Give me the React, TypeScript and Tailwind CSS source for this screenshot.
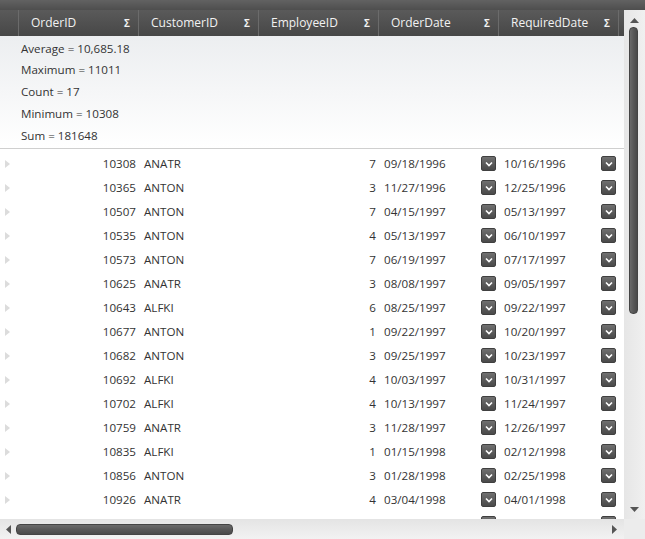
import React from 'react';

type Order = {
    id: number;
    customer: string;
    employee: number;
    orderDate: string;
    requiredDate: string;
};

const orders: Order[] = [
    { id: 10308, customer: 'ANATR', employee: 7, orderDate: '09/18/1996', requiredDate: '10/16/1996' },
    { id: 10365, customer: 'ANTON', employee: 3, orderDate: '11/27/1996', requiredDate: '12/25/1996' },
    { id: 10507, customer: 'ANTON', employee: 7, orderDate: '04/15/1997', requiredDate: '05/13/1997' },
    { id: 10535, customer: 'ANTON', employee: 4, orderDate: '05/13/1997', requiredDate: '06/10/1997' },
    { id: 10573, customer: 'ANTON', employee: 7, orderDate: '06/19/1997', requiredDate: '07/17/1997' },
    { id: 10625, customer: 'ANATR', employee: 3, orderDate: '08/08/1997', requiredDate: '09/05/1997' },
    { id: 10643, customer: 'ALFKI', employee: 6, orderDate: '08/25/1997', requiredDate: '09/22/1997' },
    { id: 10677, customer: 'ANTON', employee: 1, orderDate: '09/22/1997', requiredDate: '10/20/1997' },
    { id: 10682, customer: 'ANTON', employee: 3, orderDate: '09/25/1997', requiredDate: '10/23/1997' },
    { id: 10692, customer: 'ALFKI', employee: 4, orderDate: '10/03/1997', requiredDate: '10/31/1997' },
    { id: 10702, customer: 'ALFKI', employee: 4, orderDate: '10/13/1997', requiredDate: '11/24/1997' },
    { id: 10759, customer: 'ANATR', employee: 3, orderDate: '11/28/1997', requiredDate: '12/26/1997' },
    { id: 10835, customer: 'ALFKI', employee: 1, orderDate: '01/15/1998', requiredDate: '02/12/1998' },
    { id: 10856, customer: 'ANTON', employee: 3, orderDate: '01/28/1998', requiredDate: '02/25/1998' },
    { id: 10926, customer: 'ANATR', employee: 4, orderDate: '03/04/1998', requiredDate: '04/01/1998' },
    { id: 10952, customer: 'ALFKI', employee: 1, orderDate: '03/16/1998', requiredDate: '04/27/1998' },
];

const columns = ['OrderID', 'CustomerID', 'EmployeeID', 'OrderDate', 'RequiredDate'];

const aggregates = ['Average = 10,685.18', 'Maximum = 11011', 'Count = 17', 'Minimum = 10308', 'Sum = 181648'];

const DropButton: React.FC = () => (
    <div className="w-[15px] h-[15px] rounded-[2px] bg-gradient-to-b from-[#707070] to-[#4a4a4a] border border-[#404040] flex items-center justify-center">
        <svg width="8" height="6" viewBox="0 0 8 6">
            <path d="M1 1.5 L4 4.5 L7 1.5" stroke="#fff" strokeWidth="1.6" fill="none" />
        </svg>
    </div>
);

const HeaderCell: React.FC<{ label: string }> = ({ label }) => (
    <div className="w-[120px] shrink-0 h-full flex items-center justify-between pl-[12px] pr-[8px] border-r border-[#6b6b6b]">
        <span>{label}</span>
        <span className="text-[10px] font-bold">Σ</span>
    </div>
);

const App: React.FC = () => {
    return (
        <div className="w-[645px] h-[539px] flex flex-col bg-white overflow-hidden text-[11.6px] text-[#333]" style={{ fontFamily: '"Open Sans", "Noto Sans", sans-serif' }}>
            <div className="h-[10px] shrink-0 bg-gradient-to-b from-[#626262] to-[#4e4e4e]" />

            <div className="flex flex-1 min-h-0">
                <div className="flex-1 min-w-0 flex flex-col">
                    {/* header */}
                    <div className="h-[26px] shrink-0 flex bg-gradient-to-b from-[#5a5a5a] to-[#474747] text-[#f2f2f2] text-[12px]">
                        <div className="w-[19px] shrink-0 h-full border-r border-[#6b6b6b]" />
                        {columns.map((c) => (
                            <HeaderCell key={c} label={c} />
                        ))}
                    </div>

                    {/* aggregates */}
                    <div className="h-[113px] shrink-0 pl-[21px] pt-[1.5px] bg-gradient-to-b from-[#eceef0] to-white border-b border-[#cfcfcf]">
                        {aggregates.map((a) => (
                            <div key={a} className="h-[21.75px] leading-[21.75px]">{a}</div>
                        ))}
                    </div>

                    {/* rows */}
                    <div className="flex-1 min-h-0 overflow-hidden pt-[3px]">
                        {orders.map((o) => (
                            <div key={o.id} className="h-[24px] flex items-center">
                                <div className="w-[19px] shrink-0 flex items-center pl-[5px]">
                                    <svg width="5" height="8" viewBox="0 0 5 8">
                                        <path d="M0 0 L5 4 L0 8 Z" fill="#dcdcdc" />
                                    </svg>
                                </div>
                                <div className="w-[120px] shrink-0 text-right pr-[3px]">{o.id}</div>
                                <div className="w-[120px] shrink-0 pl-[5px]">{o.customer}</div>
                                <div className="w-[120px] shrink-0 text-right pr-[3px]">{o.employee}</div>
                                <div className="w-[120px] shrink-0 pl-[5px] pr-[3px] flex items-center justify-between">
                                    <span>{o.orderDate}</span>
                                    <DropButton />
                                </div>
                                <div className="w-[120px] shrink-0 pl-[5px] pr-[3px] flex items-center justify-between">
                                    <span>{o.requiredDate}</span>
                                    <DropButton />
                                </div>
                            </div>
                        ))}
                    </div>
                </div>

                {/* vertical scrollbar */}
                <div className="w-[21px] shrink-0 bg-gradient-to-r from-[#e6e6e6] to-[#f0f0f0] flex flex-col items-center">
                    <div className="h-[17px] flex items-end justify-center pb-[4px]">
                        <svg width="9" height="5" viewBox="0 0 9 5">
                            <path d="M0 5 L4.5 0 L9 5 Z" fill="#555" />
                        </svg>
                    </div>
                    <div className="w-[9px] h-[287px] ml-[-2px] rounded-[4px] bg-gradient-to-r from-[#6a6a6a] via-[#585858] to-[#4a4a4a] border border-[#444]" />
                    <div className="flex-1" />
                    <div className="h-[14px] flex items-start justify-center pt-[2px]">
                        <svg width="9" height="5" viewBox="0 0 9 5">
                            <path d="M0 0 L4.5 5 L9 0 Z" fill="#555" />
                        </svg>
                    </div>
                </div>
            </div>

            {/* horizontal scrollbar */}
            <div className="h-[20px] shrink-0 flex bg-gradient-to-b from-[#e4e4e4] to-[#f2f2f2]">
                <div className="flex-1 flex items-center">
                    <div className="w-[16px] flex justify-center">
                        <svg width="5" height="9" viewBox="0 0 5 9">
                            <path d="M5 0 L0 4.5 L5 9 Z" fill="#555" />
                        </svg>
                    </div>
                    <div className="w-[217px] h-[11px] rounded-[4px] bg-gradient-to-b from-[#6a6a6a] via-[#585858] to-[#4a4a4a] border border-[#444]" />
                    <div className="flex-1" />
                    <div className="w-[16px] flex justify-center mr-[2px]">
                        <svg width="5" height="9" viewBox="0 0 5 9">
                            <path d="M0 0 L5 4.5 L0 9 Z" fill="#555" />
                        </svg>
                    </div>
                </div>
                <div className="w-[21px] shrink-0 bg-[#ececec]" />
            </div>
        </div>
    );
};

export default App;
